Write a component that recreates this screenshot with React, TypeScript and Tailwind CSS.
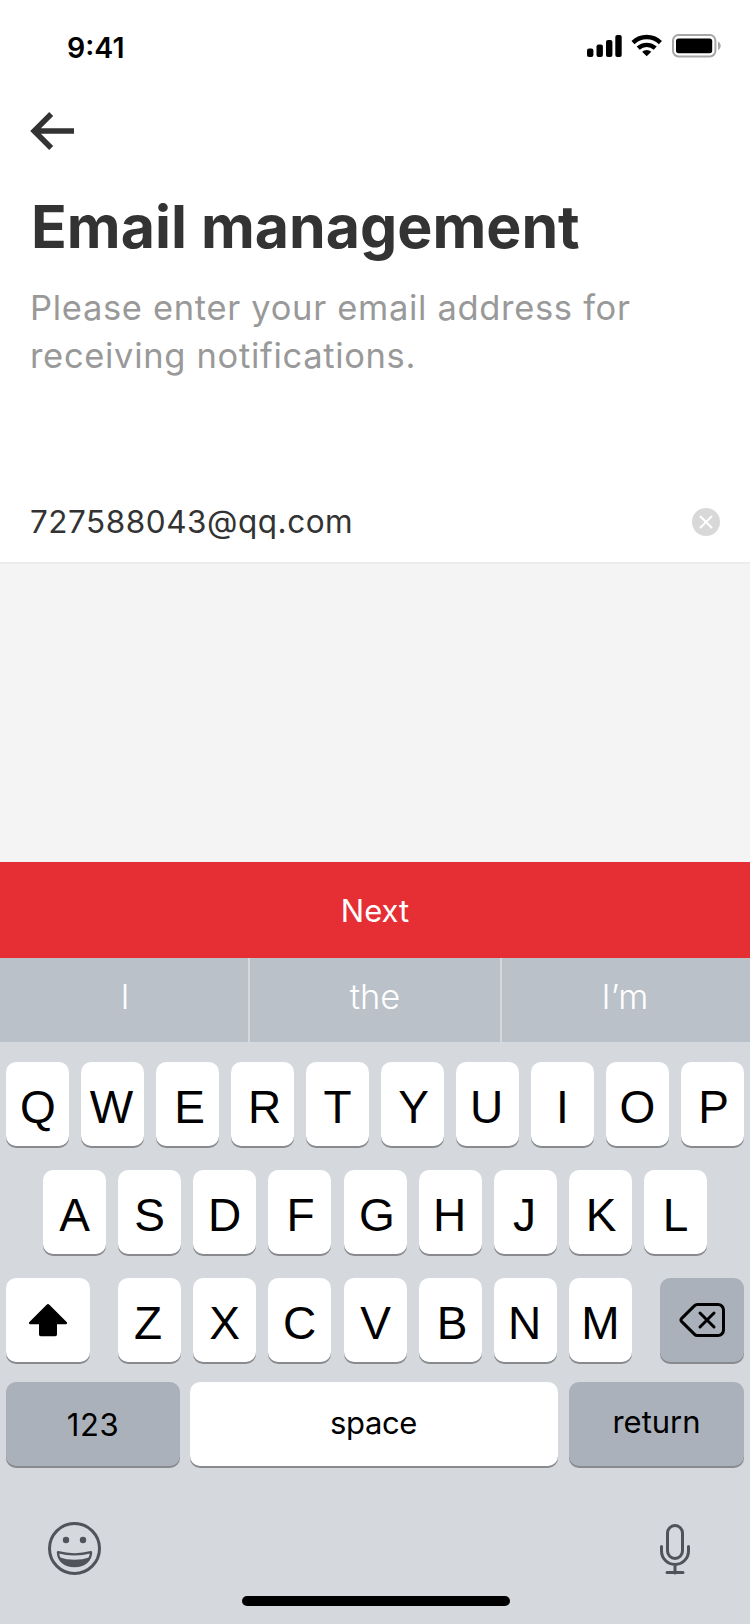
import type { ReactNode } from "react";

function StatusBar() {
  return (
    <div className="flex h-[88px] items-start justify-between pt-[33px] pr-[29px] pl-[67px]">
      <span className="text-[28.5px] leading-[29px] font-semibold text-black">9:41</span>
      <svg width="136" height="26" viewBox="585 33 136 26" fill="#000">
        <rect x="587" y="48.5" width="6.4" height="8.5" rx="2" />
        <rect x="596.5" y="44.5" width="6.4" height="12.5" rx="2" />
        <rect x="606" y="40" width="6.4" height="17" rx="2" />
        <rect x="615.3" y="35" width="6.4" height="22" rx="2" />
        <g fill="none" stroke="#000" strokeWidth="4.4">
          <path d="M633 42.6a19.5 19.5 0 0 1 27.4 0" />
          <path d="M638.2 48.2a12.4 12.4 0 0 1 17 0" />
        </g>
        <path d="M646.7 56.3l-4.6-4.5a7 7 0 0 1 9.2 0z" />
        <rect x="673" y="35" width="42.4" height="21.4" rx="5.5" fill="none" stroke="#a6a6a6" strokeWidth="2" />
        <rect x="676" y="38.6" width="36.2" height="14.6" rx="2.6" />
        <path d="M718 41.6c3.6 1.4 3.6 7 0 8.4z" fill="#a6a6a6" />
      </svg>
    </div>
  );
}

function Key({
  children,
  className = "w-[63px]",
  tone = "bg-white",
}: {
  children: ReactNode;
  className?: string;
  tone?: string;
}) {
  return (
    <button
      className={`flex h-[84px] shrink-0 items-center justify-center rounded-[10px] shadow-[0_2px_0_#898a8d] ${tone} ${className}`}
    >
      {children}
    </button>
  );
}

const nudges: Record<string, string> = {
  Q: "pl-px",
  E: "pl-1",
  R: "pl-1",
  Y: "pl-0.5",
  W: "pr-0.5",
  U: "pr-0.5",
  P: "pl-0.5",
  F: "pl-0.5",
  G: "pl-[3px]",
  H: "pr-0.5",
  J: "pr-0.5",
  K: "pl-px",
  Z: "pr-[3px]",
  B: "pl-[3px]",
  N: "pr-0.5",
};

function Letters({ chars, className = "" }: { chars: string; className?: string }) {
  return (
    <div className={`flex gap-3 ${className}`}>
      {chars.split("").map((c) => (
        <Key key={c}>
          <span
            className={`pt-[5px] font-['Liberation_Sans',sans-serif] text-[46px] leading-[50px] text-black ${nudges[c] ?? ""}`}
          >
            {c}
          </span>
        </Key>
      ))}
    </div>
  );
}

function Suggestions() {
  return (
    <div className="flex h-[84px] shrink-0 bg-[#bac1c9] text-[34.5px] leading-[48px] font-[350] text-white">
      <button className="w-[250px] border-r-2 border-[#d5d8dd] pb-1.5 pl-0.5">I</button>
      <button className="w-[252px] border-r-2 border-[#d5d8dd] pb-1.5">the</button>
      <button className="w-[248px] pr-0.5 pb-1.5">I’m</button>
    </div>
  );
}

function Keyboard() {
  return (
    <div className="flex h-[582px] shrink-0 flex-col bg-[#d5d8dd] px-1.5 pt-5">
      <Letters chars="QWERTYUIOP" />
      <div className="mt-6 flex justify-center">
        <Letters chars="ASDF" />
        <Letters chars="GHJKL" className="ml-[13px]" />
      </div>
      <div className="mt-6 flex justify-between">
        <Key className="w-[84px]">
          <svg width="40" height="34" viewBox="0 0 40 34" fill="#000">
            <path d="M18.9 1.5a1.6 1.6 0 0 1 2.2 0L38.6 19c.9.9.5 2.2-.8 2.2H29v10.3a1.7 1.7 0 0 1-1.7 1.7H12.7a1.7 1.7 0 0 1-1.7-1.7V21.2H2.2c-1.3 0-1.7-1.3-.8-2.2z" />
          </svg>
        </Key>
        <div className="flex">
          <Letters chars="ZXC" />
          <Letters chars="VBNM" className="ml-[13px]" />
        </div>
        <Key className="w-[84px]" tone="bg-[#abb1bb]">
          <svg width="48" height="36" viewBox="0 0 48 36" fill="none" stroke="#000" strokeWidth="3" strokeLinecap="round" strokeLinejoin="round">
            <path d="M19.5 2.5H40a5.5 5.5 0 0 1 5.5 5.5v20A5.5 5.5 0 0 1 40 33.5H19.5a4.5 4.5 0 0 1-3.2-1.4L3.5 19.4a1.9 1.9 0 0 1 0-2.8L16.3 3.9A4.5 4.5 0 0 1 19.5 2.5z" />
            <path d="M22 11l14 14M36 11l-14 14" />
          </svg>
        </Key>
      </div>
      <div className="mt-5 flex text-[31px] leading-10 text-black">
        <Key className="w-[174px]" tone="bg-[#abb1bb]">
          <span className="pt-px tracking-[0.6px]">123</span>
        </Key>
        <Key className="ml-2.5 w-[368px]">
          <span className="pr-px pb-0.5 tracking-[-0.4px]">space</span>
        </Key>
        <Key className="ml-[11px] w-[175px]" tone="bg-[#abb1bb]">
          <span className="pb-[5px]">return</span>
        </Key>
      </div>
      <div className="mt-[55px] flex items-start justify-between pr-[53px] pl-[41px]">
        <svg width="56" height="56" viewBox="0 0 56 56" fill="none" stroke="#50545a" strokeWidth="3">
          <circle cx="27.5" cy="27.5" r="25" />
          <circle cx="19" cy="19" r="3.2" fill="#50545a" stroke="none" />
          <circle cx="36" cy="19" r="3.2" fill="#50545a" stroke="none" />
          <path d="M11 31.2Q27.5 35.5 44 31.2C44 39.5 37 45 27.5 45S11 39.5 11 31.2z" strokeWidth="2.4" strokeLinejoin="round" />
          <path d="M12 36.2Q27.5 41.5 43 36.2C40.5 42.5 35 45.5 27.5 45.5S14.5 42.5 12 36.2z" fill="#50545a" stroke="none" />
        </svg>
        <svg className="mt-[3px]" width="32" height="52" viewBox="0 0 32 52" fill="none" stroke="#50545a" strokeWidth="3" strokeLinecap="round">
          <rect x="8.5" y="1.5" width="15" height="33" rx="7.5" />
          <path d="M2.5 22.5v4.5a13.5 13.5 0 0 0 27 0v-4.5M16 41v8M8 48.5h16" />
        </svg>
      </div>
      <div className="mt-auto mb-[18px] ml-0.5 h-2.5 w-[268px] self-center rounded-full bg-black" />
    </div>
  );
}

export default function App() {
  return (
    <div className="flex h-[1624px] w-[750px] flex-col overflow-hidden bg-[#f4f4f4] font-['Inter','Liberation_Sans',sans-serif]">
      <header className="h-[480px] shrink-0 bg-white">
        <StatusBar />
        <button className="mt-6 ml-[30px] block" aria-label="Back">
          <svg width="44" height="38" viewBox="0 0 44 38" fill="none" stroke="#333" strokeWidth="5.6">
            <path d="M44 19H5M21.2 2L4.2 19l17 17" />
          </svg>
        </button>
        <h1 className="mt-[47px] pl-[31px] text-[59px] leading-[60px] font-bold text-[#333]">
          Email management
        </h1>
        <p className="mt-[27px] pl-[30px] text-[34.5px] leading-[48px] tracking-[0.68px] text-[#999]">
          Please enter your email address for
          <br />
          receiving notifications.
        </p>
      </header>
      <div className="flex h-[84px] shrink-0 items-center justify-between border-b-2 border-[#ececec] bg-white pr-[30px] pl-[30px]">
        <span className="pt-px text-[31.5px] leading-10 tracking-[0.52px] text-[#333]">727588043@qq.com</span>
        <svg className="mt-0.5" width="28" height="28" viewBox="0 0 28 28">
          <circle cx="14" cy="14" r="14" fill="#d8d8d8" />
          <path d="M8.5 8.5l11 11M19.5 8.5l-11 11" stroke="#fff" strokeWidth="2" strokeLinecap="round" />
        </svg>
      </div>
      <div className="grow" />
      <button className="h-24 shrink-0 bg-[#e62e35] pt-0.5 text-[31px] leading-10 text-white">Next</button>
      <Suggestions />
      <Keyboard />
    </div>
  );
}
